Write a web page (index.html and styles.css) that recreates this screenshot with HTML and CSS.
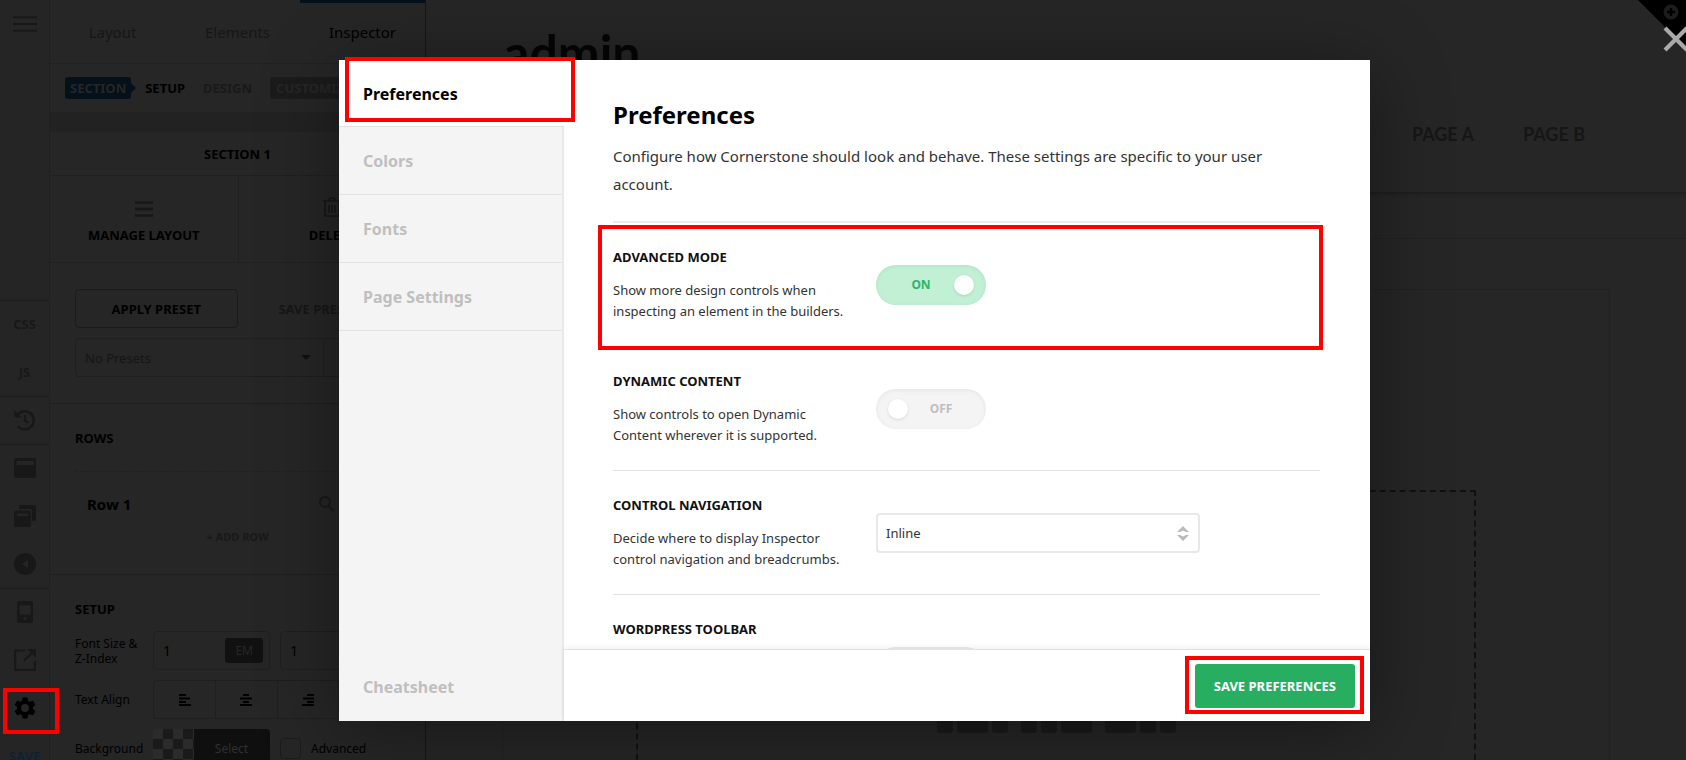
FILE: index.html
```
<!DOCTYPE html>
<html lang="en">
<head>
<meta charset="utf-8">
<title>Preferences</title>
<link rel="stylesheet" href="styles.css">
</head>
<body>
<div class="app">
  <nav class="rail" aria-label="Tools">
    <div class="rail-top">
      <button class="rail-btn" aria-label="Menu"><svg width="24" height="16" viewBox="0 0 24 16"><path d="M0 1.2h24M0 8h24M0 14.8h24" stroke="currentColor" stroke-width="2"/></svg></button>
    </div>
    <div class="rail-group">
      <button class="rail-btn">CSS</button>
      <button class="rail-btn">JS</button>
    </div>
    <div class="rail-group">
      <button class="rail-btn" aria-label="History"><svg width="22" height="22" viewBox="0 0 22 22" fill="none" stroke="currentColor"><path d="M3.6 5.8A9 9 0 1 1 4 17.2" stroke-width="2.4"/><path d="M.4 1.2v7.4h7.2z" fill="currentColor" stroke="none"/><path d="M11 6v5.4l3 2.6" stroke-width="2.2"/></svg></button>
    </div>
    <div class="rail-group">
      <button class="rail-btn" aria-label="Templates"><svg width="22" height="20" viewBox="0 0 22 20"><path fill="currentColor" fill-rule="evenodd" d="M2 0h18a2 2 0 0 1 2 2v16a2 2 0 0 1-2 2H2a2 2 0 0 1-2-2V2a2 2 0 0 1 2-2zM2.500 3v4h17V3z"/></svg></button>
      <button class="rail-btn" aria-label="Library"><svg width="22" height="22" viewBox="0 0 22 22" fill="currentColor"><path d="M7 0h13a2 2 0 0 1 2 2v12a2 2 0 0 1-2 2h-2V6a2 2 0 0 0-2-2H5V2a2 2 0 0 1 2-2z"/><path fill-rule="evenodd" d="M2 5.500h13a2 2 0 0 1 2 2V20a2 2 0 0 1-2 2H2a2 2 0 0 1-2-2V7.500a2 2 0 0 1 2-2zM3 8.500v2.500h11V8.500z"/></svg></button>
      <button class="rail-btn" aria-label="Collapse"><svg width="22" height="22" viewBox="0 0 22 22"><path fill="currentColor" fill-rule="evenodd" d="M11 0a11 11 0 1 1 0 22 11 11 0 0 1 0-22zM14 7l-6 4 6 4z"/></svg></button>
    </div>
    <div class="rail-group">
      <button class="rail-btn" aria-label="Responsive"><svg width="16" height="22" viewBox="0 0 16 22"><path fill="currentColor" fill-rule="evenodd" d="M2 0h12a2 2 0 0 1 2 2v18a2 2 0 0 1-2 2H2a2 2 0 0 1-2-2V2a2 2 0 0 1 2-2zM2.500 4.500v9h11v-9zM8 16a1.600 1.600 0 1 0 .01 0z"/></svg></button>
      <button class="rail-btn" aria-label="Open page"><svg width="22" height="22" viewBox="0 0 22 22" fill="none" stroke="currentColor" stroke-width="2.200"><path d="M11 1.500H1.200v19.300h19.600V12M10 11.500 18 4"/><path d="M13 0h9v9z" fill="currentColor" stroke="none"/></svg></button>
      <button class="rail-btn rail-btn-active" aria-label="Preferences"><svg width="22" height="22" viewBox="2 2 20 20"><path fill="currentColor" d="M19.140 12.940c.04-.3.060-.61.060-.94s-.02-.64-.07-.94l2.030-1.580a.49.49 0 0 0 .12-.61l-1.920-3.320a.49.49 0 0 0-.59-.22l-2.390.96a7 7 0 0 0-1.620-.94l-.36-2.540A.48.48 0 0 0 13.920 2.400h-3.840a.48.48 0 0 0-.47.41l-.36 2.540a7 7 0 0 0-1.620.94l-2.390-.96a.49.49 0 0 0-.59.22L2.740 8.870a.48.48 0 0 0 .12.61l2.030 1.580a6 6 0 0 0 0 1.880l-2.030 1.580a.49.49 0 0 0-.12.61l1.920 3.320c.12.22.37.29.59.22l2.390-.96c.5.38 1.030.7 1.620.94l.36 2.540c.05.24.24.41.48.41h3.840c.24 0 .44-.17.47-.41l.36-2.540a7 7 0 0 0 1.620-.94l2.390.96c.22.080.47 0 .59-.22l1.920-3.320a.48.48 0 0 0-.12-.61zM12 15.600a3.600 3.600 0 1 1 0-7.200 3.600 3.600 0 0 1 0 7.200z"/></svg></button>
    </div>
    <button class="rail-btn rail-save">SAVE</button>
  </nav>

  <aside class="panel">
    <div class="tabs">
      <button class="tab">Layout</button>
      <button class="tab">Elements</button>
      <button class="tab tab-active">Inspector</button>
    </div>
    <div class="crumbs">
      <span class="crumb-tag">SECTION</span>
      <a class="crumb crumb-current" href="#setup">SETUP</a>
      <a class="crumb" href="#design">DESIGN</a>
      <span class="crumb-custom">CUSTOMIZE</span>
    </div>
    <div class="strip"></div>
    <h2 class="panel-title">SECTION 1</h2>
    <div class="actions">
      <button class="action"><svg width="18" height="16" viewBox="0 0 18 16"><path d="M0 1.500h18M0 8h18M0 14.500h18" stroke="#171717" stroke-width="2.500"/></svg>MANAGE LAYOUT</button>
      <button class="action"><svg width="18" height="20" viewBox="0 0 18 20" fill="none" stroke="#171717" stroke-width="1.600"><path d="M0 4h18M5 4l2-3h4l2 3M2 4v15h14V4M6 8v8M9 8v8M12 8v8"/></svg>DELETE</button>
    </div>
    <section class="presets">
      <div class="preset-buttons">
        <button class="preset-btn">APPLY PRESET</button>
        <button class="preset-btn preset-muted">SAVE PRESET</button>
      </div>
      <div class="preset-select">
        <select aria-label="Preset"><option>No Presets</option></select>
        <svg width="10" height="5" viewBox="0 0 10 5"><path d="M0 0h10L5 5z" fill="#111"/></svg>
        <button class="preset-more" aria-label="More"></button>
      </div>
    </section>
    <section class="rows">
      <h3 class="group-title">ROWS</h3>
      <div class="row-item"><span>Row 1</span><svg width="15" height="16" viewBox="0 0 15 16" fill="none" stroke="#191919" stroke-width="2"><circle cx="6" cy="6" r="5"/><path d="m9.500 10 5 5"/></svg></div>
      <button class="add-row">+ ADD ROW</button>
    </section>
    <section class="setup">
      <h3 class="group-title">SETUP</h3>
      <div class="field">
        <label for="size">Font Size &amp; Z-Index</label>
        <div class="box"><input id="size" value="1"><span class="unit">EM</span></div>
        <div class="box"><input aria-label="Z-Index" value="1"></div>
      </div>
      <div class="field">
        <span>Text Align</span>
        <div class="aligns">
          <button aria-label="Left"><svg width="12" height="12" viewBox="0 0 12 12" stroke="#000" stroke-width="2"><path d="M0 1h7M0 4.500h11M0 8h7M0 11h12"/></svg></button>
          <button aria-label="Center"><svg width="12" height="12" viewBox="0 0 12 12" stroke="#000" stroke-width="2"><path d="M3 1h6M0 4.500h12M3 8h6M0 11h12"/></svg></button>
          <button aria-label="Right"><svg width="12" height="12" viewBox="0 0 12 12" stroke="#000" stroke-width="2"><path d="M5 1h7M1 4.500h11M5 8h7M0 11h12"/></svg></button>
          <button aria-label="Justify"><svg width="12" height="12" viewBox="0 0 12 12" stroke="#000" stroke-width="2"><path d="M0 1h12M0 4.500h12M0 8h12M0 11h12"/></svg></button>
        </div>
      </div>
      <div class="field">
        <span>Background</span>
        <button class="swatch"><span>Select</span></button>
        <label class="advanced"><input type="checkbox">Advanced</label>
      </div>
    </section>
  </aside>

  <main class="preview">
    <header class="site-head">
      <div class="site-name">admin</div>
      <nav class="site-nav"><a href="#a">PAGE A</a><a href="#b">PAGE B</a></nav>
    </header>
    <div class="site-bar"></div>
    <div class="site-body">
      <div class="site-card">
        <div class="drop-zone">
          <div class="chips"><i></i><i class="wide"></i><i></i></div>
          <div class="chips"><i></i><i></i><i class="wide"></i></div>
          <div class="chips"><i class="wide"></i><i></i><i></i></div>
        </div>
      </div>
    </div>
  </main>
</div>

<svg class="corner" width="48" height="48" viewBox="0 0 48 48"><path d="M0 0h48v48z"/><circle cx="33" cy="12" r="7.500" fill="#1c1c1c"/><path d="M33 8v8M29 12h8" stroke="#000" stroke-width="2.500"/></svg>

<div class="overlay">
  <div class="modal" role="dialog" aria-label="Preferences">
    <nav class="side">
      <a class="side-link side-active" href="#preferences">Preferences</a>
      <a class="side-link" href="#colors">Colors</a>
      <a class="side-link" href="#fonts">Fonts</a>
      <a class="side-link" href="#page">Page Settings</a>
      <a class="side-link side-last" href="#cheatsheet">Cheatsheet</a>
    </nav>
    <div class="content">
      <div class="scroll">
        <header class="intro">
          <h1>Preferences</h1>
          <p>Configure how Cornerstone should look and behave. These settings are specific to your user account.</p>
        </header>
        <div class="setting">
          <div><h2>ADVANCED MODE</h2><p>Show more design controls when inspecting an element in the builders.</p></div>
          <label class="toggle toggle-on"><span>ON</span><input type="checkbox" checked aria-label="Advanced mode"></label>
        </div>
        <div class="setting">
          <div><h2>DYNAMIC CONTENT</h2><p>Show controls to open Dynamic Content wherever it is supported.</p></div>
          <label class="toggle"><input type="checkbox" aria-label="Dynamic content"><span>OFF</span></label>
        </div>
        <div class="setting">
          <div><h2><label for="nav">CONTROL NAVIGATION</label></h2><p>Decide where to display Inspector control navigation and breadcrumbs.</p></div>
          <div class="select">
            <select id="nav"><option>Inline</option></select>
            <svg width="12" height="15" viewBox="0 0 12 15" fill="#bbb"><path d="M0 6 6 0l6 6H9L6 4.500 3 6zM0 9l6 6 6-6H9l-3 1.500L3 9z"/></svg>
          </div>
        </div>
        <div class="setting setting-tall">
          <h2>WORDPRESS TOOLBAR</h2>
          <label class="toggle"><input type="checkbox" aria-label="WordPress toolbar"></label>
        </div>
      </div>
      <footer class="foot"><button class="save">SAVE PREFERENCES</button></footer>
    </div>
  </div>
</div>

<button class="close" aria-label="Close"><svg width="26" height="26" viewBox="0 0 26 26"><path d="M2 2l22 22M24 2 2 24" stroke="#aaa" stroke-width="4.200"/></svg></button>
<div class="mark mark-tab"></div>
<div class="mark mark-mode"></div>
<div class="mark mark-gear"></div>
<div class="mark mark-save"></div>
</body>
</html>
```
FILE: styles.css
```
* { box-sizing: border-box; }
body {
  margin: 0;
  height: 100vh;
  overflow: hidden;
  position: relative;
  background: #262626;
  color: #000;
  font: 13px/20px "Noto Sans", "Open Sans", sans-serif;
}
h1, h2, h3, p { margin: 0; }
a { color: inherit; text-decoration: none; }
button, input, select {
  appearance: none;
  margin: 0;
  padding: 0;
  border: 0;
  border-radius: 0;
  background: none;
  color: inherit;
  font: inherit;
}
svg { display: block; flex: none; }

.app {
  display: grid;
  grid-template-columns: 49px 377px 1fr;
  height: 100%;
  overflow: hidden;
}

/* tool rail */
.rail { color: #181818; background: #252525; }
.rail-top { height: 300px; }
.rail-btn {
  display: flex;
  align-items: center;
  justify-content: center;
  width: 100%;
  height: 48px;
  font-size: 13px;
  font-weight: 700;
}
.rail-group { box-shadow: inset 0 1px #1e1e1e; }
.rail-btn-active { color: #000; }
.rail-save { color: #0c2233; }

/* inspector panel */
.panel {
  border-left: 1px solid #202020;
  border-right: 1px solid #161616;
  overflow: hidden;
}
.tabs {
  display: grid;
  grid-template-columns: repeat(3, 1fr);
  height: 64px;
  border-bottom: 1px solid #212121;
}
.tab {
  border-top: 3px solid transparent;
  border-bottom: 3px solid transparent;
  font-size: 15px;
  color: #161616;
}
.tab-active { border-top-color: #04101a; color: #000; }
.crumbs {
  display: flex;
  align-items: center;
  height: 48px;
  padding-left: 15px;
  font-weight: 700;
}
.crumb { margin-right: 18px; color: #191919; }
.crumb-current { color: #000; }
.crumb-tag {
  position: relative;
  margin-right: 14px;
  padding: 1px 5px;
  border-radius: 3px;
  background: #04101a;
  color: #262626;
}
.crumb-tag::after {
  content: "";
  position: absolute;
  left: 100%;
  top: 6px;
  border: 5px solid transparent;
  border-left-color: #04101a;
  border-right: 0;
}
.crumb-custom { padding: 1px 6px; border-radius: 3px; background: #1b1b1b; color: #262626; }
.strip { height: 20px; background: #222; }
.panel-title {
  height: 44px;
  border-bottom: 1px solid #202020;
  font-size: 13px;
  line-height: 44px;
  text-align: center;
}
.actions { display: grid; grid-template-columns: 1fr 1fr; height: 87px; border-bottom: 1px solid #202020; }
.action {
  display: flex;
  flex-direction: column;
  align-items: center;
  justify-content: flex-end;
  gap: 8px;
  padding-bottom: 17px;
  font-weight: 700;
}
.action + .action { border-left: 1px solid #202020; }
.presets { padding: 26px 25px; border-bottom: 1px solid #1f1f1f; }
.preset-buttons { display: grid; grid-template-columns: 1fr 1fr; }
.preset-btn {
  height: 39px;
  border: 1px solid #1b1b1b;
  border-radius: 4px;
  font-weight: 700;
}
.preset-muted { border-color: transparent; color: #171717; }
.preset-select {
  display: flex;
  align-items: center;
  height: 39px;
  margin-top: 10px;
  border: 1px solid #1f1f1f;
  border-radius: 4px;
  color: #151515;
}
.preset-select select { flex: 1; height: 100%; padding-left: 9px; }
.preset-more { width: 76px; height: 100%; margin-left: 12px; border-left: 1px solid #1f1f1f; }
.group-title { font-size: 13px; }
.rows { padding: 24px 25px; border-bottom: 1px solid #1f1f1f; }
.row-item {
  display: flex;
  align-items: center;
  gap: 188px;
  margin-top: 23px;
  height: 53px;
  padding: 12px 12px 0;
  border-top: 1px dashed #212121;
  font-size: 15px;
  font-weight: 700;
}
.add-row { width: 100%; height: 26px; color: #191919; font-size: 11px; font-weight: 700; }
.setup { padding: 24px 25px; }
.setup .group-title { margin-bottom: 12px; }
.field {
  display: grid;
  grid-template-columns: 68px 117px 120px;
  gap: 10px;
  align-items: center;
  height: 39px;
  margin-bottom: 10px;
  font-size: 12px;
  line-height: 15px;
}
.box {
  display: flex;
  align-items: center;
  height: 39px;
  padding: 0 6px 0 9px;
  border: 1px solid #1f1f1f;
  border-radius: 4px;
}
.box input { flex: 1; min-width: 0; font-size: 14px; }
.unit { padding: 5px 10px; border-radius: 3px; background: #111; color: #262626; }
.aligns { display: grid; grid-template-columns: repeat(4, 1fr); grid-column: 2 / 4; border: 1px solid #1f1f1f; border-radius: 4px; }
.aligns button { display: flex; align-items: center; justify-content: center; height: 37px; }
.aligns button + button { border-left: 1px solid #1f1f1f; }
.swatch {
  height: 39px;
  padding-left: 40px;
  border-radius: 4px;
  background: linear-gradient(#0f0f0f, #0f0f0f) 41px 0 no-repeat, repeating-conic-gradient(#1a1a1a 0 25%, #2b2b2b 0 50%) 0 0 / 20px 20px;
  color: #303030;
}
.advanced { display: flex; align-items: center; gap: 10px; }
.advanced input { width: 21px; height: 21px; border: 1px solid #1c1c1c; border-radius: 4px; }

/* page preview */
.preview { display: flex; flex-direction: column; overflow: hidden; font-family: Lato, sans-serif; }
.site-head {
  display: flex;
  justify-content: space-between;
  height: 193px;
  padding: 20px 101px 0 78px;
  border-bottom: 1px solid #1e1e1e;
  box-shadow: 0 1px 3px #1e1e1e;
}
.site-name { font-size: 50px; font-weight: 700; line-height: 64px; color: #050505; }
.site-nav { display: flex; gap: 49px; padding-top: 104px; font-size: 18px; font-weight: 700; color: #161616; }
.site-bar { height: 46px; border-bottom: 1px solid #222; }
.site-body { flex: 1; padding: 50px 76px 0; }
.site-card { height: 100%; padding: 200px 133px 0; border: 1px solid #212121; border-bottom: 0; border-radius: 4px 4px 0 0; }
.drop-zone {
  display: flex;
  justify-content: center;
  gap: 13px;
  height: 100%;
  padding-top: 218px;
  border: 2px dashed #111;
  border-bottom: 0;
}
.chips { display: flex; gap: 4px; }
.chips i { width: 16px; height: 23px; border-radius: 3px; background: #1b1b1b; }
.chips .wide { width: 31px; }
.corner { position: absolute; top: 0; right: 0; }

/* dialog */
.overlay { position: absolute; inset: 0; padding: 60px 316px 39px 339px; }
.modal {
  display: flex;
  height: 100%;
  background: #fff;
  box-shadow: 0 10px 70px rgba(0, 0, 0, .38);
}
.side {
  display: flex;
  flex-direction: column;
  width: 225px;
  border-right: 2px solid #e9e9e9;
  background: #f4f4f4;
}
.side-link {
  flex: none;
  height: 68px;
  padding-left: 24px;
  border-bottom: 1px solid #e2e2e2;
  color: #bfbfbf;
  font-size: 16px;
  font-weight: 700;
  line-height: 68px;
}
.side-active { height: 67px; margin-right: -2px; background: #fff; color: #000; }
.side-last { margin-top: auto; border-bottom: 0; }
.content { display: flex; flex-direction: column; flex: 1; min-width: 0; }
.scroll { flex: 1; min-height: 0; padding: 39px 50px 0 49px; overflow: hidden; }
.intro { padding-bottom: 23px; border-bottom: 2px solid #ebebeb; }
.intro h1 { font-size: 24px; line-height: 32px; }
.intro p { margin-top: 11px; color: #333; font-size: 15px; line-height: 28px; }
.setting {
  display: grid;
  grid-template-columns: 238px 1fr;
  gap: 25px;
  align-items: center;
  padding: 24px 0;
  border-bottom: 1px solid #e2e2e2;
}
.setting-tall { height: 145px; }
.setting-tall h2 { align-self: start; }
.setting h2 { color: #111; font-size: 13px; line-height: 20px; }
.setting p { margin-top: 13px; color: #333; line-height: 21px; }
.toggle {
  display: flex;
  align-items: center;
  width: 110px;
  height: 40px;
  padding: 0 12px;
  border-radius: 20px;
  background: #f4f4f4;
  box-shadow: inset 0 1px 4px rgba(0, 0, 0, .07);
  color: #bfbfbf;
  font-size: 12px;
  font-weight: 700;
}
.toggle span { flex: 1; text-align: center; }
.toggle input { width: 20px; height: 20px; border-radius: 50%; background: #fff; box-shadow: 0 1px 3px rgba(0, 0, 0, .12); }
.toggle-on { background: #c1f0d4; color: #2fb56a; }
.select { position: relative; width: 73%; }
.select select {
  width: 100%;
  height: 40px;
  padding: 0 8px;
  border: 2px solid #e8e8e8;
  border-radius: 4px;
  color: #333;
}
.select svg { position: absolute; right: 11px; top: 13px; pointer-events: none; }
.foot {
  display: flex;
  justify-content: flex-end;
  height: 72px;
  padding: 14px 15px;
  border-top: 1px solid #e2e2e2;
  box-shadow: 0 -2px 6px rgba(0, 0, 0, .06);
}
.save { height: 44px; padding: 0 19px; border-radius: 3px; background: #27ae60; color: #fff; font-weight: 700; }

.close { position: absolute; top: 26px; right: -3px; }

/* highlight frames */
.mark { position: absolute; border: 4px solid #f00; pointer-events: none; }
.mark-tab { left: 345px; top: 57px; width: 230px; height: 65px; }
.mark-mode { left: 598px; right: 363px; top: 225px; height: 125px; }
.mark-gear { left: 3px; top: 688px; width: 56px; height: 46px; }
.mark-save { right: 322px; bottom: 46px; width: 179px; height: 58px; }
```
